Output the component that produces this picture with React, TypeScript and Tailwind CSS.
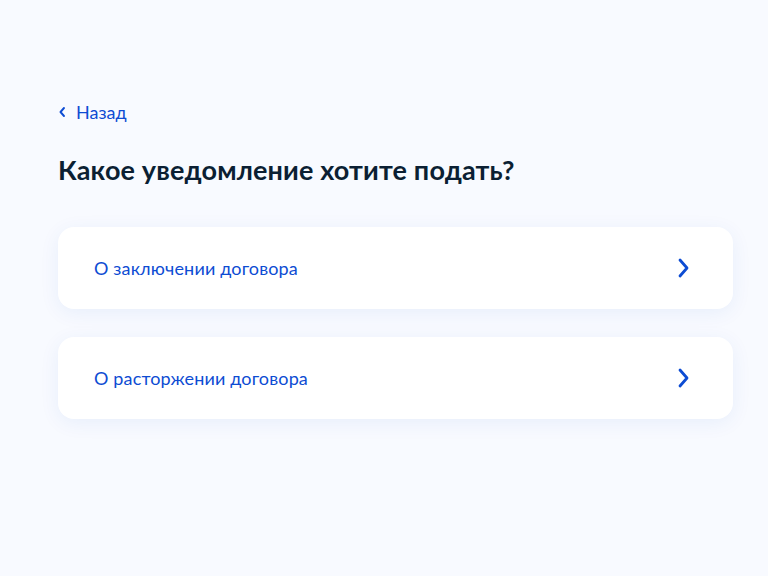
import React from "react";

function Chevron({ className }: { className?: string }) {
  return (
    <svg className={className} width="12" height="22" viewBox="0 0 12 22" fill="none">
      <path d="M3 3l7 8-7 8" stroke="#0d4cd3" strokeWidth="2.8" strokeLinecap="round" strokeLinejoin="round" />
    </svg>
  );
}

export default function App() {
  const items = ["О заключении договора", "О расторжении договора"];
  return (
    <div className="min-h-[576px] w-full bg-[#f8faff]" style={{ fontFamily: "Lato, 'Noto Sans', sans-serif" }}>
      <div className="px-[58px] pt-[100px]">
        <div className="flex items-center gap-[9px] text-[#0d4cd3] text-[18px] leading-[24px]">
          <svg width="9" height="12" viewBox="0 0 9 12" fill="none">
            <path d="M6 2L2.5 6 6 10" stroke="#0d4cd3" strokeWidth="1.9" strokeLinecap="round" strokeLinejoin="round" />
          </svg>
          <span>Назад</span>
        </div>
        <h1 className="mt-[28px] text-[27px] leading-[36px] font-bold tracking-[0.15px] text-[#0b1f33]">Какое уведомление хотите подать?</h1>
        <div className="mt-[39px] flex w-[675px] flex-col gap-[28px]">
          {items.map((t) => (
            <div
              key={t}
              className="flex h-[82px] items-center justify-between rounded-[16px] bg-white pl-[36px] pr-[44px] shadow-[0_4px_20px_rgba(0,80,200,0.07)]"
            >
              <span className="text-[18px] tracking-[0.15px] text-[#0d4cd3]">{t}</span>
              <Chevron />
            </div>
          ))}
        </div>
      </div>
    </div>
  );
}
